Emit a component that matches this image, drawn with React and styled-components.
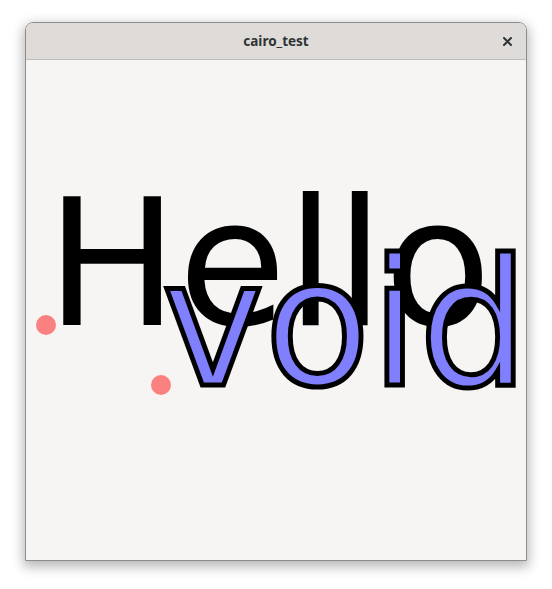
// dependencies
import React from 'react'
import styled, { createGlobalStyle } from 'styled-components'

// global page styles
const GlobalStyle = createGlobalStyle`
    html, body {
        margin: 0;
        padding: 0;
        background: #ffffff;
    }
`

// styled components
const Desktop = styled.div`
    width: 552px;
    height: 589px;
    padding: 22px 0 0 25px;
    box-sizing: border-box;
`

const Window = styled.div`
    width: 502px;
    display: flex;
    flex-direction: column;
    border: 1px solid #8c8c8c;
    border-radius: 8px 8px 0 0;
    overflow: hidden;
    box-sizing: border-box;
    box-shadow: 0 4px 12px 2px rgba(0, 0, 0, 0.28);
`

const HeaderBar = styled.div`
    height: 36px;
    display: flex;
    align-items: center;
    justify-content: center;
    position: relative;
    background: #dedbd8;
    border-bottom: 1px solid #bfbab5;
`

const Title = styled.span`
    font-family: "Noto Sans", "DejaVu Sans", sans-serif;
    font-weight: 700;
    font-size: 13.5px;
    color: #2e3436;
`

const CloseButton = styled.button`
    position: absolute;
    right: 12px;
    top: 11px;
    width: 14px;
    height: 14px;
    padding: 0;
    border: none;
    background: transparent;
    display: flex;
    align-items: center;
    justify-content: center;
`

const Canvas = styled.svg`
    display: block;
    width: 500px;
    height: 500px;
    background: #f6f5f4;
`

// cairo text sample, in canvas pixels
const FONT_SIZE = 175.8
const DOT = 'rgba(255, 51, 51, 0.6)'

const CairoTest = () => (
    <Canvas viewBox="0 0 500 500">
        <text x="20" y="265" fontFamily="DejaVu Sans" fontSize={FONT_SIZE} fill="#000">
            Hello
        </text>
        <text
            transform="translate(135.5 325) scale(0.9876 1)"
            x="0"
            y="0"
            fontFamily="DejaVu Sans"
            fontSize={FONT_SIZE}
            fill="#8080ff"
            stroke="#000"
            strokeWidth="5"
        >
            void
        </text>
        <circle cx="20" cy="265" r="10" fill={DOT} />
        <circle cx="135" cy="325" r="10" fill={DOT} />
    </Canvas>
)

// app driver code
const App = () => {
    return (
        <>
            <GlobalStyle />
            <Desktop>
                <Window>
                    <HeaderBar>
                        <Title>cairo_test</Title>
                        <CloseButton aria-label="Close">
                            <svg width="9" height="9" viewBox="0 0 9 9">
                                <path d="M1 1L8 8M8 1L1 8" stroke="#2e3436" strokeWidth="2" strokeLinecap="round" />
                            </svg>
                        </CloseButton>
                    </HeaderBar>
                    <CairoTest />
                </Window>
            </Desktop>
        </>
    )
}

export default App
